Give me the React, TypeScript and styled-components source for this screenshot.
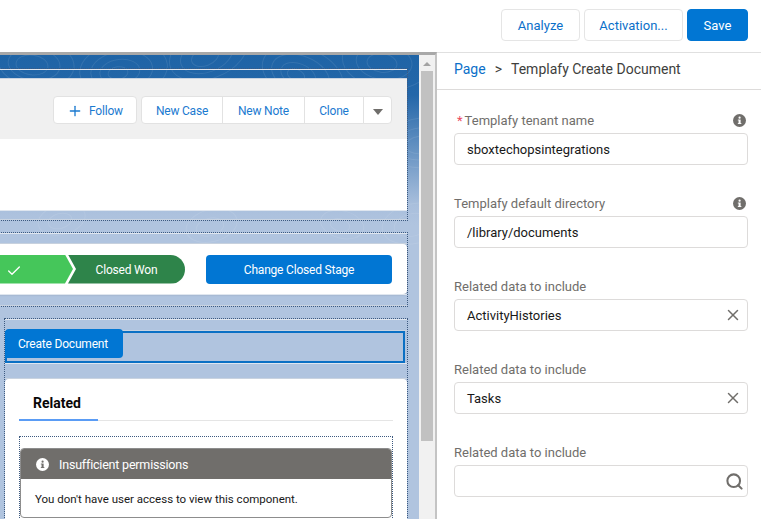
import styled, { createGlobalStyle } from "styled-components";
import { Check, Plus, Search, X } from "lucide-react";

const GlobalStyle = createGlobalStyle`
  html, body {
    margin: 0;
    padding: 0;
    background: #fff;
    overflow: hidden;
  }
  * {
    box-sizing: border-box;
  }
`;

const Page = styled.div`
  width: 761px;
  height: 519px;
  display: flex;
  flex-direction: column;
  overflow: hidden;
  font-family: Roboto, "Open Sans", sans-serif;
  font-size: 12px;
  color: #16325c;
`;

const TopBar = styled.header`
  flex: 0 0 52px;
  display: flex;
  justify-content: flex-end;
  align-items: flex-start;
  gap: 4px;
  padding: 9px 13px 0 0;
  font-size: 13px;
`;

const BarButton = styled.button<{ $primary?: boolean; $w: number }>`
  width: ${(p) => p.$w}px;
  height: 32px;
  padding: 0;
  border-radius: 4px;
  border: 1px solid ${(p) => (p.$primary ? "#0176d3" : "#e5e5e5")};
  background: ${(p) => (p.$primary ? "#0176d3" : "#fff")};
  color: ${(p) => (p.$primary ? "#fff" : "#0b6fc9")};
  font: inherit;
`;

const Body = styled.div`
  flex: 1;
  min-height: 0;
  display: flex;
`;

const Canvas = styled.main`
  flex: 0 0 437px;
  display: flex;
  background: #f3f3f3;
  border-top: 3px solid #a8a8a8;
  border-right: 2px solid #c4c4c4;
  overflow: hidden;
`;

const Stage = styled.div`
  position: relative;
  flex: 0 0 419px;
  overflow: hidden;
  letter-spacing: -0.2px;
  background: linear-gradient(#1f64a6 0, #2467a9 40px, #a9bfdc 150px, #b0c4df 170px);
`;

const Contours = styled.svg`
  position: absolute;
  inset: 0;
  width: 419px;
  height: 200px;
  pointer-events: none;
`;

const Region = styled.section<{ $top: number; $left?: number }>`
  position: relative;
  margin-top: ${(p) => p.$top}px;
  margin-left: ${(p) => p.$left ?? -8}px;
  margin-right: 11px;
  border: 1px dotted #3d5a80;
`;

const Band = styled.div<{ $h: number }>`
  height: ${(p) => p.$h}px;
  border-top: 1px solid #dfe6ef;
  border-bottom: 1px solid #c9d3e0;
`;

const HighlightHead = styled.div`
  height: 60px;
  display: flex;
  justify-content: flex-end;
  align-items: flex-start;
  gap: 4px;
  padding: 17px 15px 0 0;
  background: #f0f0f0;
`;

const OutlineBtn = styled.button<{ $w: number }>`
  display: flex;
  align-items: center;
  justify-content: center;
  gap: 6px;
  width: ${(p) => p.$w}px;
  height: 28px;
  padding: 1px 0 0;
  background: #fff;
  border: 1px solid #e2e2e2;
  border-radius: 4px;
  color: #1b7ad0;
  font: inherit;
  letter-spacing: inherit;
`;

const BtnGroup = styled.div`
  display: flex;
  & > button {
    border-radius: 0;
    margin-left: -1px;
  }
  & > button:first-child {
    border-radius: 4px 0 0 4px;
    margin-left: 0;
  }
  & > button:last-child {
    border-radius: 0 4px 4px 0;
  }
`;

const Caret = styled.span`
  width: 0;
  height: 0;
  margin-top: 3px;
  border-left: 5.5px solid transparent;
  border-right: 5.5px solid transparent;
  border-top: 6px solid #706e6b;
`;

const WhiteBody = styled.div`
  height: 71px;
  background: #fff;
`;

const PathCard = styled.div`
  height: 50px;
  display: flex;
  align-items: center;
  justify-content: flex-end;
  gap: 21px;
  padding: 0 15px 0 0;
  background: #fff;
  border-radius: 0 4px 4px 0;
  box-shadow: 0 1px 2px #0000002e;
`;

const Path = styled.div`
  display: flex;
  height: 29px;
`;

const Chevron = styled.div`
  width: 80px;
  display: flex;
  align-items: center;
  padding: 4px 0 0 13px;
  background: #45c65a;
  color: #fff;
  clip-path: polygon(0 0, 72px 0, 80px 50%, 72px 100%, 0 100%);
`;

const ClosedWon = styled.div`
  width: 117px;
  margin-left: -5px;
  display: flex;
  align-items: center;
  justify-content: center;
  padding-top: 2px;
  background: #2e844a;
  color: #fff;
  border-radius: 0 15px 15px 0;
  clip-path: polygon(0 0, 100% 0, 100% 100%, 0 100%, 8px 50%);
`;

const StageBtn = styled.button`
  width: 186px;
  height: 29px;
  padding: 1px 0 0;
  border: 0;
  border-radius: 4px;
  background: #0176d3;
  color: #fff;
  font: inherit;
  letter-spacing: inherit;
`;

const Selected = styled.div`
  position: relative;
  height: 32px;
  margin-right: 2px;
  border: 2px solid #0b70c4;
  background: #b0c4df;
`;

const CreateDoc = styled.div`
  position: absolute;
  top: -4px;
  left: -2px;
  width: 118px;
  height: 29px;
  display: flex;
  align-items: center;
  padding-left: 13px;
  background: #0176d3;
  color: #fff;
  border-radius: 4px 4px 4px 0;
`;

const RelatedCard = styled.div`
  height: 150px;
  padding: 0 14px;
  background: #fff;
  border-radius: 4px 4px 0 0;
`;

const Tabs = styled.div`
  height: 42px;
  border-bottom: 1px solid #e5e5e5;
`;

const Tab = styled.div`
  width: 79px;
  height: 42px;
  padding: 16px 0 0 14px;
  border-bottom: 2px solid #5a9cf5;
  color: #080707;
  font-size: 14px;
  font-weight: 700;
  line-height: 16px;
  letter-spacing: 0;
`;

const Dropzone = styled.div`
  margin-top: 15px;
  padding: 11px 0 0;
  height: 90px;
  border: 1px dotted #3d5a80;
  border-bottom: 0;
`;

const Message = styled.div`
  border: 1px solid #8d8d8d;
  border-radius: 4px;
  overflow: hidden;
`;

const MessageHead = styled.div`
  height: 30px;
  display: flex;
  align-items: center;
  gap: 10px;
  padding: 1px 0 0 15px;
  background: #706e6b;
  color: #fff;
  font-size: 12.5px;
`;

const MessageBody = styled.div`
  height: 38px;
  padding: 13px 14px 0;
  color: #181818;
  font-size: 11.5px;
  letter-spacing: 0;
`;

const Scrollbar = styled.div`
  flex: 0 0 16px;
  display: flex;
  flex-direction: column;
  align-items: center;
  padding-top: 7px;
  background: #f1f1f1;
`;

const ScrollArrow = styled.span`
  width: 0;
  height: 0;
  border-left: 4px solid transparent;
  border-right: 4px solid transparent;
  border-bottom: 4px solid #a3a3a3;
`;

const ScrollThumb = styled.div`
  width: 12px;
  height: 370px;
  margin-top: 5px;
  background: #c1c1c1;
`;

const Panel = styled.aside`
  flex: 1;
  border-top: 1px solid #e0e0e0;
  font-size: 13px;
`;

const Crumbs = styled.div`
  height: 37px;
  display: flex;
  align-items: center;
  padding: 0 0 4px 17px;
  gap: 9px;
  border-bottom: 1px solid #dddbda;
  color: #3e3e3c;
  font-size: 14px;
`;

const CrumbLink = styled.span`
  color: #0b6fc9;
`;

const Fields = styled.div`
  padding: 20px 13px 0 17px;
  display: flex;
  flex-direction: column;
  gap: 28px;
`;

const Field = styled.div`
  display: flex;
  flex-direction: column;
`;

const LabelRow = styled.div`
  height: 20px;
  display: flex;
  align-items: center;
  justify-content: space-between;
  padding-right: 2px;
  color: #706e6b;
`;

const Required = styled.span`
  color: #ea4b5f;
  margin: 0 2px 0 3px;
`;

const Input = styled.div`
  height: 32px;
  margin-top: 3px;
  display: flex;
  align-items: center;
  justify-content: space-between;
  padding: 0 8px 0 12px;
  background: #fff;
  border: 1px solid #dddbda;
  border-radius: 4px;
  color: #181818;
`;

const ClearIcon = styled(X)`
  margin-right: -3px;
`;

const SearchIcon = styled(Search)`
  margin-right: -5px;
`;

const InfoIcon = ({ fill, mark }: { fill: string; mark: string }) => (
  <svg width={13} height={13} viewBox="0 0 14 14">
    <circle cx="7" cy="7" r="7" fill={fill} />
    <rect x="6" y="6" width="2.2" height="4.6" fill={mark} />
    <rect x="5.2" y="6" width="1" height="1" fill={mark} />
    <rect x="5.2" y="9.8" width="3.8" height="1" fill={mark} />
    <circle cx="7.1" cy="4" r="1.2" fill={mark} />
  </svg>
);

// loose topographic rings behind the page, only the top part of the canvas shows them
const rings = [
  { x: 32, y: 10, r: [16, 26, 38] },
  { x: 118, y: 18, r: [10, 20, 31, 44] },
  { x: 205, y: 2, r: [14, 27, 40] },
  { x: 296, y: 20, r: [9, 18, 30, 42] },
  { x: 382, y: 8, r: [15, 28, 44] },
  { x: 420, y: 90, r: [14, 26, 40] },
  { x: 412, y: 170, r: [18, 32] },
  { x: 60, y: 166, r: [12, 24] },
  { x: 210, y: 172, r: [14, 26] },
  { x: 340, y: 170, r: [10, 22] },
];

export default function App() {
  return (
    <Page>
      <GlobalStyle />
      <TopBar>
        <BarButton $w={79}>Analyze</BarButton>
        <BarButton $w={99}>Activation...</BarButton>
        <BarButton $w={61} $primary>
          Save
        </BarButton>
      </TopBar>
      <Body>
        <Canvas>
          <Stage>
            <Contours viewBox="0 0 419 200" fill="none" stroke="#ffffff" strokeOpacity="0.09">
              {rings.flatMap((g) =>
                g.r.map((r, i) => (
                  <ellipse
                    key={`${g.x}-${r}`}
                    cx={g.x + i * 2}
                    cy={g.y - i}
                    rx={r}
                    ry={r * 0.62}
                    transform={`rotate(${(g.x % 50) - 25} ${g.x} ${g.y})`}
                  />
                ))
              )}
            </Contours>
            <Region $top={13}>
              <Band $h={10} />
              <HighlightHead>
                <OutlineBtn $w={84}>
                  <Plus size={16} strokeWidth={2} />
                  Follow
                </OutlineBtn>
                <BtnGroup>
                  <OutlineBtn $w={82}>New Case</OutlineBtn>
                  <OutlineBtn $w={83}>New Note</OutlineBtn>
                  <OutlineBtn $w={60}>Clone</OutlineBtn>
                  <OutlineBtn $w={29}>
                    <Caret />
                  </OutlineBtn>
                </BtnGroup>
              </HighlightHead>
              <WhiteBody />
              <Band $h={10} />
            </Region>
            <Region $top={11}>
              <Band $h={11} />
              <PathCard>
                <Path>
                  <Chevron>
                    <Check size={16} strokeWidth={2} />
                  </Chevron>
                  <ClosedWon>Closed Won</ClosedWon>
                </Path>
                <StageBtn>Change Closed Stage</StageBtn>
              </PathCard>
              <Band $h={12} />
            </Region>
            <Region $top={11} $left={4}>
              <Band $h={12} />
              <Selected>
                <CreateDoc>Create Document</CreateDoc>
              </Selected>
              <Band $h={16} />
              <RelatedCard>
                <Tabs>
                  <Tab>Related</Tab>
                </Tabs>
                <Dropzone>
                  <Message>
                    <MessageHead>
                      <InfoIcon fill="#fff" mark="#706e6b" />
                      Insufficient permissions
                    </MessageHead>
                    <MessageBody>You don't have user access to view this component.</MessageBody>
                  </Message>
                </Dropzone>
              </RelatedCard>
            </Region>
          </Stage>
          <Scrollbar>
            <ScrollArrow />
            <ScrollThumb />
          </Scrollbar>
        </Canvas>
        <Panel>
          <Crumbs>
            <CrumbLink>Page</CrumbLink>
            <span>&gt;</span>
            <span>Templafy Create Document</span>
          </Crumbs>
          <Fields>
            <Field>
              <LabelRow>
                <span>
                  <Required>*</Required>Templafy tenant name
                </span>
                <InfoIcon fill="#706e6b" mark="#fff" />
              </LabelRow>
              <Input>sboxtechopsintegrations</Input>
            </Field>
            <Field>
              <LabelRow>
                <span>Templafy default directory</span>
                <InfoIcon fill="#706e6b" mark="#fff" />
              </LabelRow>
              <Input>/library/documents</Input>
            </Field>
            <Field>
              <LabelRow>
                <span>Related data to include</span>
              </LabelRow>
              <Input>
                ActivityHistories
                <ClearIcon size={18} strokeWidth={2} color="#706e6b" />
              </Input>
            </Field>
            <Field>
              <LabelRow>
                <span>Related data to include</span>
              </LabelRow>
              <Input>
                Tasks
                <ClearIcon size={18} strokeWidth={2} color="#706e6b" />
              </Input>
            </Field>
            <Field>
              <LabelRow>
                <span>Related data to include</span>
              </LabelRow>
              <Input>
                <span />
                <SearchIcon size={19} strokeWidth={2.6} color="#706e6b" />
              </Input>
            </Field>
          </Fields>
        </Panel>
      </Body>
    </Page>
  );
}
